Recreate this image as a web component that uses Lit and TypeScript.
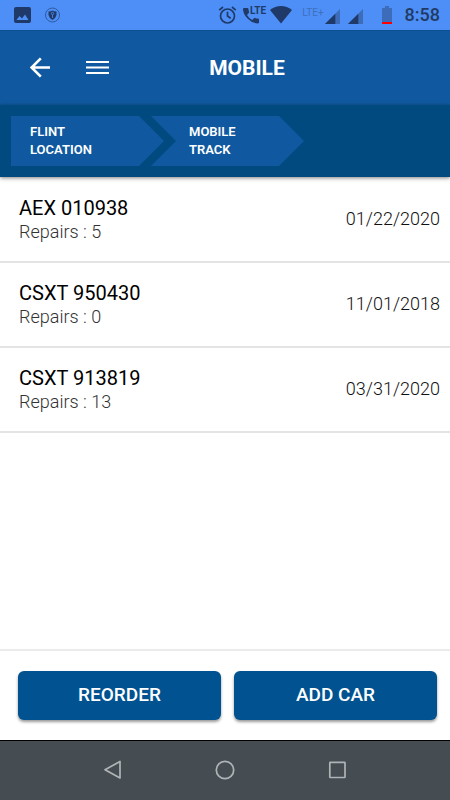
import { LitElement, html, css } from "lit";
import { customElement, state } from "lit/decorators.js";

interface Car {
  id: string;
  repairs: number;
  date: string;
}

@customElement("status-bar")
class StatusBar extends LitElement {
  static styles = css`
    :host {
      display: flex;
      justify-content: space-between;
      align-items: center;
      height: 30px;
      padding: 0 10px 0 14px;
      background: #4d8ff7;
      color: #1f3a69;
    }
    .group {
      display: flex;
      align-items: center;
    }
    .left {
      gap: 13px;
    }
    svg {
      display: block;
      flex: none;
    }
    .wifi {
      margin: 0 10px 0 4px;
    }
    .call {
      display: flex;
      align-items: flex-start;
      margin-left: 5px;
    }
    .lte {
      margin-left: -11px;
      font-size: 10px;
      line-height: 11px;
      font-weight: 700;
    }
    .faint {
      font-size: 10px;
      line-height: 12px;
      color: #3e6fbc;
      margin: 0 1px 5px 0;
    }
    .signal {
      margin: 2px 8px 0 0;
    }
    .battery {
      margin: 0 13px 0 11px;
    }
    .clock {
      font-size: 18px;
      line-height: 30px;
      font-weight: 500;
      color: #223a63;
    }
  `;

  private signal() {
    return html`<svg class="signal" width="15" height="15" viewBox="0 0 16 16" aria-hidden="true">
      <path d="M0 16 16 0V16Z" fill="#3c6cba" />
      <path d="M0 16 11 5V16Z" fill="#1f3a69" />
    </svg>`;
  }

  render() {
    return html`
      <div class="group left">
        <svg width="18" height="18" viewBox="0 0 18 18" aria-hidden="true">
          <path
            fill="#1f3a69"
            fill-rule="evenodd"
            d="M2 1h13q2 0 2 2v12q0 2-2 2H2q-2 0-2-2V3q0-2 2-2ZM2.500 14h12L11 8.500 8 12.500 5.500 10Z"
          />
        </svg>
        <svg width="16" height="16" viewBox="0 0 16 16" aria-hidden="true">
          <circle cx="7.500" cy="8" r="7" fill="none" stroke="#315a9f" />
          <path fill="#1f3a69" d="M3.500 4.500Q6 4.500 7.500 3.500 9 4.500 11.500 4.500V8Q11 11 7.500 13 4 11 3.500 8Z" />
          <path fill="none" stroke="#4d8ff7" stroke-width=".8" d="M7.500 8v3M6.300 6.500a1.200 1.200 0 1 1 2.400 0a1.200 1.200 0 1 1-2.400 0" />
        </svg>
      </div>
      <div class="group">
        <svg width="20" height="20" viewBox="0 0 20 20" aria-hidden="true">
          <g fill="none" stroke="#1f3a69" stroke-width="1.700">
            <circle cx="9.500" cy="11" r="7" />
            <path d="M9.500 6.800V11l3.200 2.300M1.200 5.200 5 2M14 2l3.800 3.200" />
          </g>
        </svg>
        <div class="call">
          <svg width="18" height="20" viewBox="0 0 18 20" aria-hidden="true">
            <path
              fill="#1f3a69"
              d="M1 3h3.500q.8 0 .9.800.1 1.500.6 3 .2.600-.3 1.100L4 9.900q2 3.500 5.200 5l1.800-1.700q.5-.5 1.100-.3 1.500.5 3 .6.900.1.900.9v3.200q0 .8-1 .8Q9 18.200 4.500 13.500 0 9 0 4 0 3 1 3Z"
            />
          </svg>
          <span class="lte">LTE</span>
        </div>
        <svg class="wifi" width="22" height="18" viewBox="0 0 22 18" aria-hidden="true">
          <path fill="#1f3a69" d="M0 4Q5 0 11 0T22 4L11 17.500Z" />
        </svg>
        <span class="faint">LTE+</span>
        ${this.signal()} ${this.signal()}
        <svg class="battery" width="10" height="18" viewBox="0 0 10 18" aria-hidden="true">
          <path fill="#3c6cba" d="M0 2h3V0h4v2h3v14H0Z" />
          <path fill="#f00" d="M0 16h10v2H0Z" />
        </svg>
        <time class="clock">8:58</time>
      </div>
    `;
  }
}

@customElement("system-nav")
class SystemNav extends LitElement {
  static styles = css`
    :host {
      display: flex;
      justify-content: center;
      gap: 82px;
      align-items: center;
      height: 58px;
      padding-bottom: 1px;
      border-top: 1px solid #000;
      background: #454d52;
    }
    button {
      padding: 0;
      border: 0;
      background: none;
      width: 30px;
      height: 30px;
    }
    svg {
      display: block;
      margin: auto;
    }
  `;

  render() {
    return html`
      <button aria-label="Back">
        <svg width="20" height="20" viewBox="0 0 20 20" fill="none" stroke="#b1b4b6" stroke-width="1.700">
          <path d="M17 1.500V18L2 9.700Z" stroke-linejoin="round" />
        </svg>
      </button>
      <button aria-label="Home">
        <svg width="20" height="20" viewBox="0 0 20 20" fill="none" stroke="#b1b4b6" stroke-width="1.700">
          <circle cx="10" cy="10" r="8.700" />
        </svg>
      </button>
      <button aria-label="Recent apps">
        <svg width="20" height="20" viewBox="0 0 20 20" fill="none" stroke="#b1b4b6" stroke-width="1.700">
          <rect x="2.800" y="2.300" width="15.200" height="15.200" rx=".5" />
        </svg>
      </button>
    `;
  }
}

@customElement("app-root")
class AppRoot extends LitElement {
  static styles = css`
    :host {
      display: flex;
      flex-direction: column;
      min-height: 100vh;
      background: #fff;
      color: #000;
      font-family: Roboto, "Liberation Sans", sans-serif;
    }
    .header {
      display: grid;
      grid-template-columns: auto 1fr;
      align-items: center;
      box-sizing: border-box;
      height: 75px;
      padding: 0 67px 0 26px;
      border-top: 1px solid #0b5092;
      background: #1059a0;
      color: #fff;
    }
    .tools {
      display: flex;
      gap: 29px;
    }
    .tools button {
      display: block;
      width: 28px;
      height: 28px;
      padding: 0;
      border: 0;
      background: none;
      color: inherit;
    }
    .tools svg {
      display: block;
    }
    h1 {
      margin: 0;
      font-size: 21px;
      line-height: 28px;
      font-weight: 700;
      text-align: center;
    }
    .crumbs {
      display: flex;
      padding: 11px;
      background: #004a80;
      box-shadow: 0 1px 4px rgba(0, 0, 0, 0.5);
    }
    .crumb {
      display: flex;
      flex-direction: column;
      justify-content: center;
      box-sizing: border-box;
      width: 153px;
      height: 50px;
      padding: 0 0 0 19px;
      background: #1059a0;
      color: #fff;
      font-size: 13px;
      line-height: 18px;
      font-weight: 600;
      text-decoration: none;
      clip-path: polygon(0 0, calc(100% - 25px) 0, 100% 50%, calc(100% - 25px) 100%, 0 100%);
    }
    .crumb + .crumb {
      margin-left: -13px;
      padding-left: 38px;
      clip-path: polygon(0 0, calc(100% - 25px) 0, 100% 50%, calc(100% - 25px) 100%, 0 100%, 25px 50%);
    }
    .cars {
      flex: 1;
      margin: 0;
      padding: 1px 0 0;
      list-style: none;
    }
    .car {
      display: flex;
      justify-content: space-between;
      align-items: center;
      padding: 15px 10px 17px 19px;
      border-bottom: 2px solid #e4e4e4;
      font-size: 18px;
      font-weight: 300;
      line-height: 24px;
    }
    .info {
      padding-top: 3px;
    }
    .name {
      font-size: 20px;
      font-weight: 400;
    }
    .repairs {
      color: #333;
    }
    .date {
      color: #111;
    }
    .actions {
      display: grid;
      grid-template-columns: 1fr 1fr;
      gap: 13px;
      padding: 20px 13px 20px 18px;
      border-top: 2px solid #ebebeb;
    }
    .action {
      height: 49px;
      padding: 0 0 2px;
      border: 0;
      border-radius: 6px;
      background: #005390;
      color: #fff;
      font: 500 19px/24px Roboto, "Liberation Sans", sans-serif;
      box-shadow: 0 2px 3px rgba(0, 0, 0, 0.4);
    }
  `;

  @state() private cars: Car[] = [
    { id: "AEX 010938", repairs: 5, date: "01/22/2020" },
    { id: "CSXT 950430", repairs: 0, date: "11/01/2018" },
    { id: "CSXT 913819", repairs: 13, date: "03/31/2020" },
  ];

  private reorder() {
    this.cars = [...this.cars].reverse();
  }

  render() {
    return html`
      <status-bar></status-bar>
      <header class="header">
        <div class="tools">
          <button aria-label="Back">
            <svg width="28" height="28" viewBox="0 0 28 28" fill="none" stroke="#fff" stroke-width="2.600">
              <path d="M24 13.500H6M14.800 4.300 5.600 13.500l9.200 9.200" />
            </svg>
          </button>
          <button aria-label="Menu">
            <svg width="28" height="28" viewBox="0 0 28 28" fill="#fff">
              <path d="M3 7h23v2H3ZM3 12.500h23v2H3ZM3 18h23v2H3Z" />
            </svg>
          </button>
        </div>
        <h1>MOBILE</h1>
      </header>
      <nav class="crumbs" aria-label="Breadcrumb">
        <a class="crumb" href="#location"><span>FLINT</span><span>LOCATION</span></a>
        <a class="crumb" href="#track"><span>MOBILE</span><span>TRACK</span></a>
      </nav>
      <ul class="cars">
        ${this.cars.map(
          (car) => html`<li class="car">
            <div class="info">
              <div class="name">${car.id}</div>
              <div class="repairs">Repairs : ${car.repairs}</div>
            </div>
            <time class="date">${car.date}</time>
          </li>`
        )}
      </ul>
      <div class="actions">
        <button class="action" @click=${this.reorder}>REORDER</button>
        <button class="action">ADD CAR</button>
      </div>
      <system-nav></system-nav>
    `;
  }
}
